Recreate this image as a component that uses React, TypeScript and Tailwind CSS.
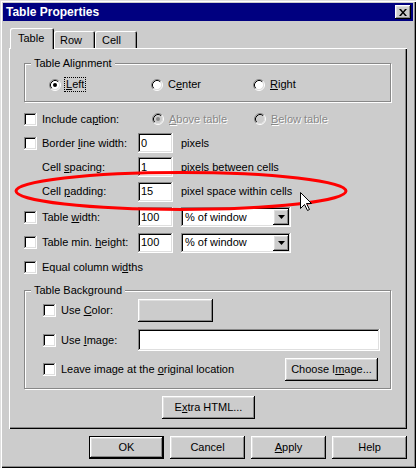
import React from "react";

const raised =
  "shadow-[inset_-1px_-1px_#000,inset_1px_1px_#fff,inset_-2px_-2px_#888,inset_2px_2px_#dfdfdf]";
const sunken =
  "shadow-[inset_-1px_-1px_#fff,inset_1px_1px_#888,inset_-2px_-2px_#dfdfdf,inset_2px_2px_#000]";
const etched =
  "border border-[#888] shadow-[inset_1px_1px_#fff,1px_1px_#fff]";
const dim = "text-[#888] [text-shadow:1px_1px_0_#fff]";

function Check() {
  return <span className={`inline-block w-[13px] h-[13px] shrink-0 bg-white ${sunken}`} />;
}

function Radio({ checked = false, disabled = false }: { checked?: boolean; disabled?: boolean }) {
  return (
    <svg width="12" height="12" viewBox="0 0 12 12" className="shrink-0">
      <circle cx="6" cy="6" r="4.5" fill={disabled ? "#cccccc" : "#ffffff"} />
      <path d="M2.11 9.89 A5.5 5.5 0 0 1 9.89 2.11" stroke="#888" fill="none" />
      <path d="M9.89 2.11 A5.5 5.5 0 0 1 2.11 9.89" stroke="#fff" fill="none" />
      <path d="M2.82 9.18 A4.5 4.5 0 0 1 9.18 2.82" stroke="#000" fill="none" />
      <path d="M9.18 2.82 A4.5 4.5 0 0 1 2.82 9.18" stroke="#dfdfdf" fill="none" />
      {checked && <circle cx="6" cy="6" r="2" fill={disabled ? "#888" : "#000"} />}
    </svg>
  );
}

function Field({ value, className = "" }: { value?: string; className?: string }) {
  return (
    <div className={`h-[20px] bg-white pl-[3px] flex items-center ${sunken} ${className}`}>
      {value}
    </div>
  );
}

function Select() {
  return (
    <div className={`w-[110px] h-[20px] bg-white flex items-center justify-between pl-[4px] pr-[2px] ${sunken}`}>
      <span>% of window</span>
      <span className={`w-[16px] h-[16px] bg-[#cccccc] flex items-center justify-center ${raised}`}>
        <svg width="7" height="4" viewBox="0 0 7 4">
          <path d="M0 0H7L3.5 4Z" fill="#000" />
        </svg>
      </span>
    </div>
  );
}

function Btn({
  children,
  className = "",
  def = false,
}: {
  children?: React.ReactNode;
  className?: string;
  def?: boolean;
}) {
  if (def) {
    return (
      <div className={`h-[23px] border border-black flex ${className}`}>
        <div className={`flex-1 flex items-center justify-center bg-[#cccccc] ${raised}`}>{children}</div>
      </div>
    );
  }
  return (
    <div className={`h-[23px] flex items-center justify-center bg-[#cccccc] ${raised} ${className}`}>
      {children}
    </div>
  );
}

export default function App() {
  return (
    <div className="relative w-[416px] h-[468px] bg-[#cccccc] p-[3px] flex flex-col text-black text-[11px] leading-[13px] font-['Liberation_Sans',Arial,sans-serif] shadow-[inset_1px_1px_#dfdfdf,inset_2px_2px_#fff,inset_-1px_-1px_#000,inset_-2px_-2px_#888]">
      {/* title bar */}
      <div className="h-[18px] bg-[#000080] flex items-center justify-between pl-[3px] pr-[2px]">
        <span className="text-white font-bold text-[12px]">Table Properties</span>
        <span className={`w-[16px] h-[14px] bg-[#cccccc] flex items-center justify-center ${raised}`}>
          <svg width="8" height="7" viewBox="0 0 8 7">
            <path d="M0 0H2L4 2.5L6 0H8L5 3.5L8 7H6L4 4.5L2 7H0L3 3.5Z" fill="#000" />
          </svg>
        </span>
      </div>

      <div className="flex flex-col px-[6px]">
        {/* tabs */}
        <div className="mt-[7px] h-[20px] flex items-end pl-[1px]">
          <div className="relative z-10 w-[44px] h-[21px] -mb-[1px] bg-[#cccccc] rounded-t-[2px] pl-[8px] flex items-center shadow-[inset_1px_1px_#fff,inset_-1px_0_#000,inset_-2px_0_#888]">
            Table
          </div>
          <div className="w-[41px] h-[17px] bg-[#cccccc] rounded-t-[2px] pl-[6px] pt-[2px] flex items-center shadow-[inset_1px_1px_#fff,inset_-1px_0_#000,inset_-2px_0_#888]">
            Row
          </div>
          <div className="w-[42px] h-[17px] bg-[#cccccc] rounded-t-[2px] pl-[7px] pt-[2px] flex items-center shadow-[inset_1px_1px_#fff,inset_-1px_0_#000,inset_-2px_0_#888]">
            Cell
          </div>
        </div>

        {/* tab panel */}
        <div className="w-[398px] h-[381px] pt-[8px] pl-[15px] flex flex-col shadow-[inset_1px_1px_#fff,inset_-1px_-1px_#000,inset_-2px_-2px_#888]">
          <fieldset className={`w-[367px] ${etched}`}>
            <legend className="ml-[6px] px-[3px] leading-[14px] bg-[#cccccc]">Table Alignment</legend>
            <div className="h-[31px] pt-[8px] pl-[24px] flex items-start">
              <div className="w-[102px] flex items-center gap-[4px]">
                <Radio checked />
                <span className="px-[1px] outline-1 outline-dotted outline-black">
                  <u>L</u>eft
                </span>
              </div>
              <div className="w-[102px] flex items-center gap-[4px]">
                <Radio />
                <span className="px-[1px]">
                  C<u>e</u>nter
                </span>
              </div>
              <div className="w-[102px] flex items-center gap-[4px]">
                <Radio />
                <span className="px-[1px]">
                  <u>R</u>ight
                </span>
              </div>
            </div>
          </fieldset>

          <div className="mt-[5px] flex flex-col">
            <div className="h-[24px] flex items-center">
              <div className="w-[114px] flex items-center gap-[5px]">
                <Check />
                <span>
                  Include ca<u>p</u>tion:
                </span>
              </div>
              <div className={`ml-[14px] w-[102px] flex items-center gap-[4px] ${dim}`}>
                <Radio checked disabled />
                <span className="px-[1px]">
                  <u>A</u>bove table
                </span>
              </div>
              <div className={`w-[102px] flex items-center gap-[4px] ${dim}`}>
                <Radio disabled />
                <span className="px-[1px]">
                  <u>B</u>elow table
                </span>
              </div>
            </div>

            <div className="h-[24px] flex items-center">
              <div className="w-[114px] flex items-center gap-[5px]">
                <Check />
                <span>
                  Border <u>l</u>ine width:
                </span>
              </div>
              <Field value="0" className="w-[35px]" />
              <span className="ml-[8px]">pixels</span>
            </div>

            <div className="h-[24px] flex items-center">
              <div className="w-[114px] pl-[18px]">
                Cell <u>s</u>pacing:
              </div>
              <Field value="1" className="w-[35px]" />
              <span className="ml-[8px]">pixels between cells</span>
            </div>

            <div className="h-[25px] flex items-center">
              <div className="w-[114px] pl-[18px]">
                Cell <u>p</u>adding:
              </div>
              <Field value="15" className="w-[35px]" />
              <span className="ml-[8px]">pixel space within cells</span>
            </div>

            <div className="h-[26px] flex items-center">
              <div className="w-[114px] flex items-center gap-[5px]">
                <Check />
                <span>
                  Table <u>w</u>idth:
                </span>
              </div>
              <Field value="100" className="w-[35px]" />
              <div className="ml-[8px]">
                <Select />
              </div>
            </div>

            <div className="h-[25px] flex items-center">
              <div className="w-[114px] flex items-center gap-[5px]">
                <Check />
                <span>
                  Table min. <u>h</u>eight:
                </span>
              </div>
              <Field value="100" className="w-[35px]" />
              <div className="ml-[8px]">
                <Select />
              </div>
            </div>

            <div className="h-[24px] flex items-center gap-[5px]">
              <Check />
              <span>
                Equal column wi<u>d</u>ths
              </span>
            </div>
          </div>

          <fieldset className={`mt-[4px] w-[367px] ${etched}`}>
            <legend className="ml-[6px] px-[3px] leading-[14px] bg-[#cccccc]">Table Background</legend>
            <div className="pl-[18px] pb-[6px] flex flex-col">
              <div className="h-[26px] flex items-center">
                <div className="w-[95px] flex items-center gap-[5px]">
                  <Check />
                  <span>
                    Use <u>C</u>olor:
                  </span>
                </div>
                <Btn className="w-[75px]" />
              </div>
              <div className="h-[34px] flex items-center">
                <div className="w-[95px] flex items-center gap-[5px]">
                  <Check />
                  <span>
                    Use <u>I</u>mage:
                  </span>
                </div>
                <Field className="w-[242px] !h-[22px]" />
              </div>
              <div className="h-[25px] flex items-center pr-[12px]">
                <div className="flex items-center gap-[5px]">
                  <Check />
                  <span>
                    Leave image at the <u>o</u>riginal location
                  </span>
                </div>
                <Btn className="ml-auto w-[93px]">
                  Choose I<u>m</u>age...
                </Btn>
              </div>
            </div>
          </fieldset>

          <Btn className="mt-[7px] ml-[138px] w-[93px]">
            E<u>x</u>tra HTML...
          </Btn>
        </div>

        {/* dialog buttons */}
        <div className="mt-[7px] w-[398px] flex justify-end gap-[6px]">
          <Btn def className="w-[75px]">
            OK
          </Btn>
          <Btn className="w-[75px]">Cancel</Btn>
          <Btn className="w-[75px]">
            <u>A</u>pply
          </Btn>
          <Btn className="w-[75px]">Help</Btn>
        </div>
      </div>

      {/* red highlight ellipse */}
      <svg className="absolute left-[14px] top-[170px] pointer-events-none" width="336" height="42" viewBox="0 0 336 42">
        <ellipse cx="167" cy="21" rx="165" ry="18.5" fill="none" stroke="#ff0000" strokeWidth="3" />
      </svg>

      {/* mouse pointer */}
      <svg className="absolute left-[300px] top-[192px] pointer-events-none" width="13" height="20" viewBox="0 0 13 20">
        <path d="M0.5 0.5V16.5L4.5 12.5L7.5 18.5L9.5 17.5L6.5 11.5H11.5Z" fill="#fff" stroke="#000" strokeWidth="1" />
      </svg>
    </div>
  );
}
